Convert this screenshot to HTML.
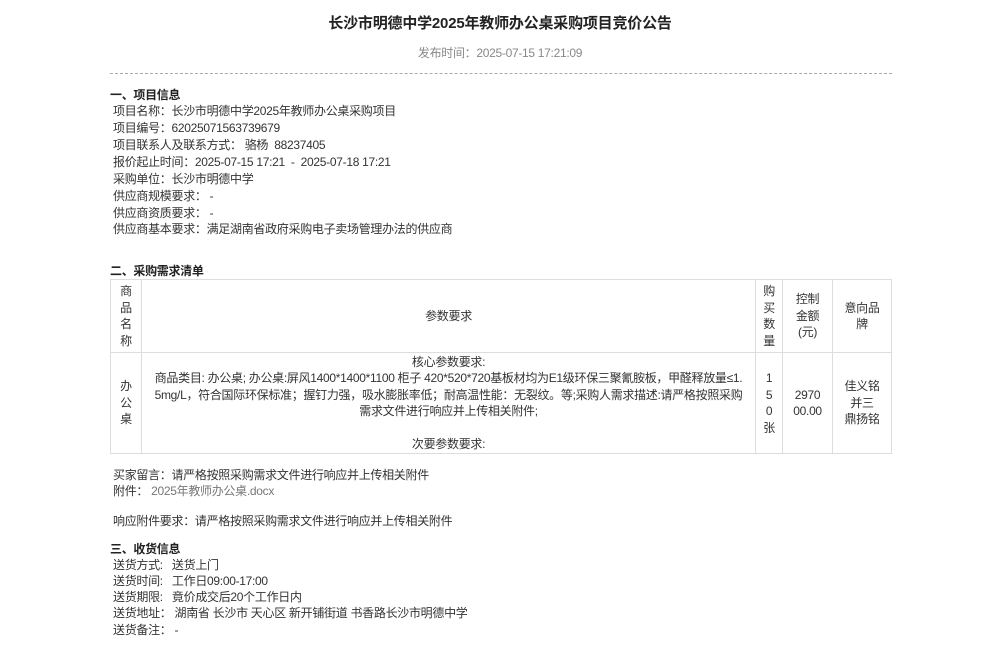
<!DOCTYPE html>
<html><head><meta charset="utf-8"><style>
*{margin:0;padding:0;box-sizing:border-box}
body{width:1000px;height:648px;background:#fff;font-family:"Liberation Sans","Noto Sans CJK SC",sans-serif;font-size:12px;color:#333;position:relative;overflow:hidden;letter-spacing:-0.3px}
.a{position:absolute;white-space:nowrap;line-height:16px}
.b{font-weight:bold;color:#222}
table{position:absolute;left:110px;top:279px;width:782px;border-collapse:collapse}
td{border:1px solid #ddd;text-align:center;vertical-align:middle;line-height:16.5px;font-size:12px;padding:0 3px}
</style></head><body>
<div class="a b" style="left:0;width:1000px;text-align:center;top:14px;font-size:15px;line-height:20px;letter-spacing:-0.2px">长沙市明德中学2025年教师办公桌采购项目竞价公告</div>
<div class="a" style="left:0;width:1000px;text-align:center;top:45px;color:#888">发布时间：2025-07-15 17:21:09</div>
<div style="position:absolute;left:110px;top:73px;width:782px;border-top:1px dashed #aaa"></div>
<div class="a b" style="left:110px;top:87px">一、项目信息</div>
<div class="a" style="left:113px;top:103px">项目名称：长沙市明德中学2025年教师办公桌采购项目</div>
<div class="a" style="left:113px;top:120px">项目编号：62025071563739679</div>
<div class="a" style="left:113px;top:137px">项目联系人及联系方式： 骆杨&nbsp; 88237405</div>
<div class="a" style="left:113px;top:154px">报价起止时间：2025-07-15 17:21&nbsp; -&nbsp; 2025-07-18 17:21</div>
<div class="a" style="left:113px;top:171px">采购单位：长沙市明德中学</div>
<div class="a" style="left:113px;top:188px">供应商规模要求： -</div>
<div class="a" style="left:113px;top:205px">供应商资质要求： -</div>
<div class="a" style="left:113px;top:221px">供应商基本要求：满足湖南省政府采购电子卖场管理办法的供应商</div>
<div class="a b" style="left:110px;top:263px">二、采购需求清单</div>
<table>
<tr style="height:73px"><td style="width:31px">商<br>品<br>名<br>称</td><td style="width:615px">参数要求</td><td style="width:27px">购<br>买<br>数<br>量</td><td style="width:50px">控制<br>金额<br>(元)</td><td style="width:59px">意向品<br>牌</td></tr>
<tr style="height:101px"><td>办<br>公<br>桌</td><td style="padding:0 10px;word-break:break-all">核心参数要求:<br>商品类目: 办公桌; 办公桌:屏风1400*1400*1100 柜子 420*520*720基板材均为E1级环保三聚氰胺板，甲醛释放量≤1.5mg/L，符合国际环保标准；握钉力强，吸水膨胀率低；耐高温性能：无裂纹。等;采购人需求描述:请严格按照采购需求文件进行响应并上传相关附件;<br><br>次要参数要求:</td><td>1<br>5<br>0<br>张</td><td>2970<br>00.00</td><td>佳义铭<br>并三<br>鼎扬铭</td></tr>
</table>
<div class="a" style="left:113px;top:467px">买家留言：请严格按照采购需求文件进行响应并上传相关附件</div>
<div class="a" style="left:113px;top:483px">附件： <span style="color:#777">2025年教师办公桌.docx</span></div>
<div class="a" style="left:113px;top:513px">响应附件要求：请严格按照采购需求文件进行响应并上传相关附件</div>
<div class="a b" style="left:110px;top:541px">三、收货信息</div>
<div class="a" style="left:113px;top:557px">送货方式:&nbsp;&nbsp; 送货上门</div>
<div class="a" style="left:113px;top:573px">送货时间:&nbsp;&nbsp; 工作日09:00-17:00</div>
<div class="a" style="left:113px;top:589px">送货期限:&nbsp;&nbsp; 竟价成交后20个工作日内</div>
<div class="a" style="left:113px;top:605px">送货地址： 湖南省 长沙市 天心区 新开铺街道 书香路长沙市明德中学</div>
<div class="a" style="left:113px;top:622px">送货备注： -</div>
</body></html>
